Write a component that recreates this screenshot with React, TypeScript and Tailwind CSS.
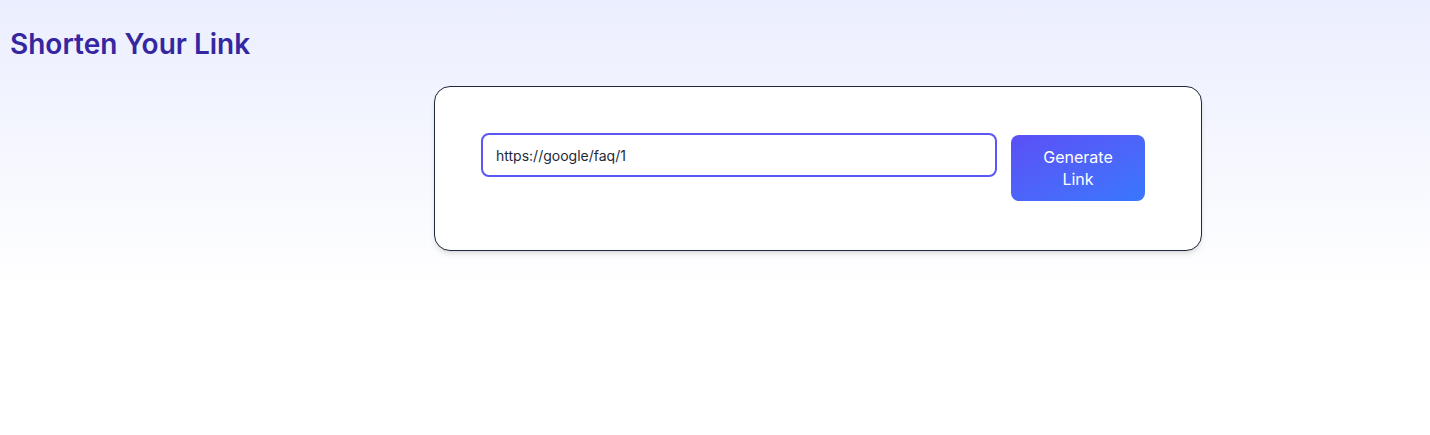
import { useState } from 'react';

export default function App() {
  const [url, setUrl] = useState('https://google/faq/1');

  return (
    <div className="min-h-screen bg-white font-['Inter','Noto_Sans',sans-serif]">
      <div className="bg-gradient-to-b from-[#ebeefe] to-white pb-10">
        <h1 className="px-2.5 pt-[26px] text-[28px] font-semibold leading-9 text-[#3526a1]">
          Shorten Your Link
        </h1>
        <div className="ml-[434px] mt-6 w-[768px] rounded-2xl border border-gray-800 bg-white px-[46px] pt-[46px] pb-[49px] shadow-md">
          <div className="flex items-start gap-[14px]">
            <input
              value={url}
              onChange={(e) => setUrl(e.target.value)}
              className="h-[44px] w-[516px] rounded-lg border-2 border-[#5b57f4] bg-white px-[13px] text-sm text-gray-800 outline-none"
            />
            <button
              type="button"
              className="mt-[2px] w-[134px] rounded-lg bg-gradient-to-br from-[#5a4ff6] to-[#3877fd] py-[11px] text-center text-base leading-[22px] text-white"
            >
              Generate
              <br />
              Link
            </button>
          </div>
        </div>
      </div>
    </div>
  );
}
